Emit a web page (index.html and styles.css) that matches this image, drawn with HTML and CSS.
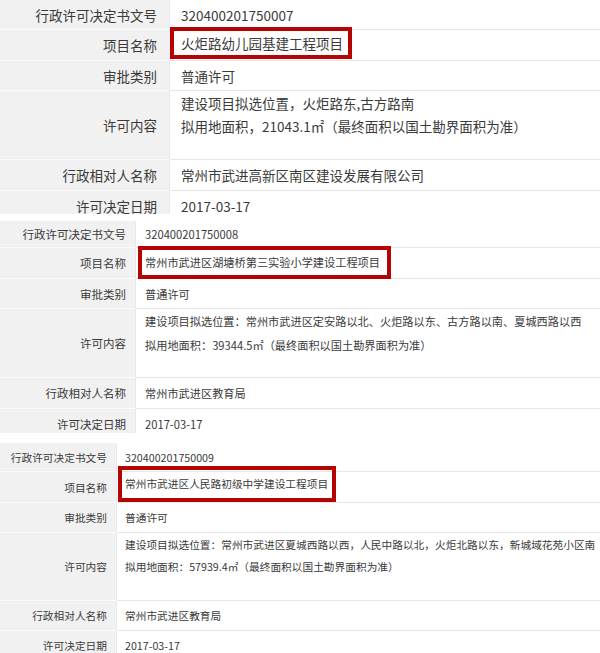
FILE: index.html
```html
<!DOCTYPE html>
<html lang="zh-CN">
<head>
  <meta charset="UTF-8">
  <title>行政许可公示</title>
  <link rel="stylesheet" href="styles.css">
</head>
<body>

  <div class="permit permit--one">
    <div class="permit-row">
      <div class="permit-label">行政许可决定书文号</div>
      <div class="permit-value">320400201750007</div>
    </div>
    <div class="permit-row">
      <div class="permit-label">项目名称</div>
      <div class="permit-value"><span class="mark">火炬路幼儿园基建工程项目</span></div>
    </div>
    <div class="permit-row">
      <div class="permit-label">审批类别</div>
      <div class="permit-value">普通许可</div>
    </div>
    <div class="permit-row permit-row--tall">
      <div class="permit-label">许可内容</div>
      <div class="permit-value">建设项目拟选位置，火炬路东,古方路南<br>拟用地面积，21043.1㎡（最终面积以国土勘界面积为准）</div>
    </div>
    <div class="permit-row">
      <div class="permit-label">行政相对人名称</div>
      <div class="permit-value">常州市武进高新区南区建设发展有限公司</div>
    </div>
    <div class="permit-row">
      <div class="permit-label">许可决定日期</div>
      <div class="permit-value">2017-03-17</div>
    </div>
  </div>

  <div class="permit permit--two">
    <div class="permit-row">
      <div class="permit-label">行政许可决定书文号</div>
      <div class="permit-value">320400201750008</div>
    </div>
    <div class="permit-row">
      <div class="permit-label">项目名称</div>
      <div class="permit-value"><span class="mark">常州市武进区湖塘桥第三实验小学建设工程项目</span></div>
    </div>
    <div class="permit-row">
      <div class="permit-label">审批类别</div>
      <div class="permit-value">普通许可</div>
    </div>
    <div class="permit-row permit-row--tall">
      <div class="permit-label">许可内容</div>
      <div class="permit-value">建设项目拟选位置：常州市武进区定安路以北、火炬路以东、古方路以南、夏城西路以西<br>拟用地面积：39344.5㎡（最终面积以国土勘界面积为准）</div>
    </div>
    <div class="permit-row">
      <div class="permit-label">行政相对人名称</div>
      <div class="permit-value">常州市武进区教育局</div>
    </div>
    <div class="permit-row">
      <div class="permit-label">许可决定日期</div>
      <div class="permit-value">2017-03-17</div>
    </div>
  </div>

  <div class="permit permit--three">
    <div class="permit-row">
      <div class="permit-label">行政许可决定书文号</div>
      <div class="permit-value">320400201750009</div>
    </div>
    <div class="permit-row">
      <div class="permit-label">项目名称</div>
      <div class="permit-value"><span class="mark">常州市武进区人民路初级中学建设工程项目</span></div>
    </div>
    <div class="permit-row">
      <div class="permit-label">审批类别</div>
      <div class="permit-value">普通许可</div>
    </div>
    <div class="permit-row permit-row--tall">
      <div class="permit-label">许可内容</div>
      <div class="permit-value">建设项目拟选位置：常州市武进区夏城西路以西，人民中路以北，火炬北路以东，新城域花苑小区南<br>拟用地面积：57939.4㎡（最终面积以国土勘界面积为准）</div>
    </div>
    <div class="permit-row">
      <div class="permit-label">行政相对人名称</div>
      <div class="permit-value">常州市武进区教育局</div>
    </div>
    <div class="permit-row">
      <div class="permit-label">许可决定日期</div>
      <div class="permit-value">2017-03-17</div>
    </div>
  </div>

</body>
</html>
```

FILE: styles.css
```css
body {
  margin: 0;
  background: #fff;
  font-family: "Noto Sans CJK SC", "Noto Sans", sans-serif;
  color: #3a3a3a;
}

/* one screenshot of the permit table; the three are cut at different scales */
.permit {
  overflow: hidden;
}
.permit-row {
  display: flex;
  box-sizing: border-box;
  height: 30px;
}
.permit-label {
  flex: none;
  width: var(--label-w);
  box-sizing: border-box;
  padding-right: var(--label-pad);
  background: #f1f1f1;
  border-bottom: 1px solid #fbfbfb;
  border-right: 1px solid #e9e9e9;
  font-size: var(--label-size);
  display: flex;
  align-items: center;
  justify-content: flex-end;
  white-space: nowrap;
}
.permit-value {
  flex: 1;
  min-width: 0;
  padding-left: var(--value-pad);
  border-bottom: 1px solid #e6e6e6;
  font-size: var(--value-size);
  display: flex;
  align-items: center;
  white-space: nowrap;
}
.permit-row--tall .permit-value {
  display: block;
  line-height: var(--content-lh);
  padding-top: var(--content-pt);
}

/* red annotation box round the project name */
.mark {
  align-self: flex-start;
  display: inline-block;
  border: 4px solid #b40404;
  margin-left: var(--mark-left);
  margin-top: var(--mark-top);
  padding: 0 var(--mark-pr) 0 var(--mark-pl);
  line-height: var(--mark-lh);
}

.permit--one {
  height: 214px;
  --label-w: 170px;
  --label-pad: 12px;
  --label-size: 13.5px;
  --value-pad: 11px;
  --value-size: 13.5px;
  --content-lh: 23px;
  --content-pt: 1px;
  --mark-left: -11px;
  --mark-top: -3px;
  --mark-pl: 7px;
  --mark-pr: 5px;
  --mark-lh: 24px;
}
.permit--one .permit-row:nth-child(2) { height: 31px; }
.permit--one .permit-row--tall { height: 69px; }
.permit--one .permit-row:nth-child(5) { height: 31px; }

.permit--two {
  margin-top: 7px;
  height: 212px;
  --label-w: 136px;
  --label-pad: 9px;
  --label-size: 11.5px;
  --value-pad: 9px;
  --value-size: 11.2px;
  --content-lh: 24px;
  --content-pt: 0px;
  --mark-left: -7px;
  --mark-top: -2px;
  --mark-pl: 3px;
  --mark-pr: 7px;
  --mark-lh: 25px;
}
.permit--two .permit-row:first-child { height: 27px; }
.permit--two .permit-row:nth-child(2) { height: 31px; }
.permit--two .permit-row--tall { height: 69px; }
.permit--two .permit-row:nth-child(5) { height: 31px; }

.permit--three {
  margin-top: 10px;
  height: 210px;
  --label-w: 117px;
  --label-pad: 9px;
  --label-size: 10.7px;
  --value-pad: 8px;
  --value-size: 10.7px;
  --content-lh: 22px;
  --content-pt: 1px;
  --mark-left: -7px;
  --mark-top: -6px;
  --mark-pl: 3px;
  --mark-pr: 4px;
  --mark-lh: 28px;
}
.permit--three .permit-row:first-child { height: 29px; }
.permit--three .permit-row:nth-child(2) { height: 31px; }
.permit--three .permit-row--tall { height: 68px; }
```
